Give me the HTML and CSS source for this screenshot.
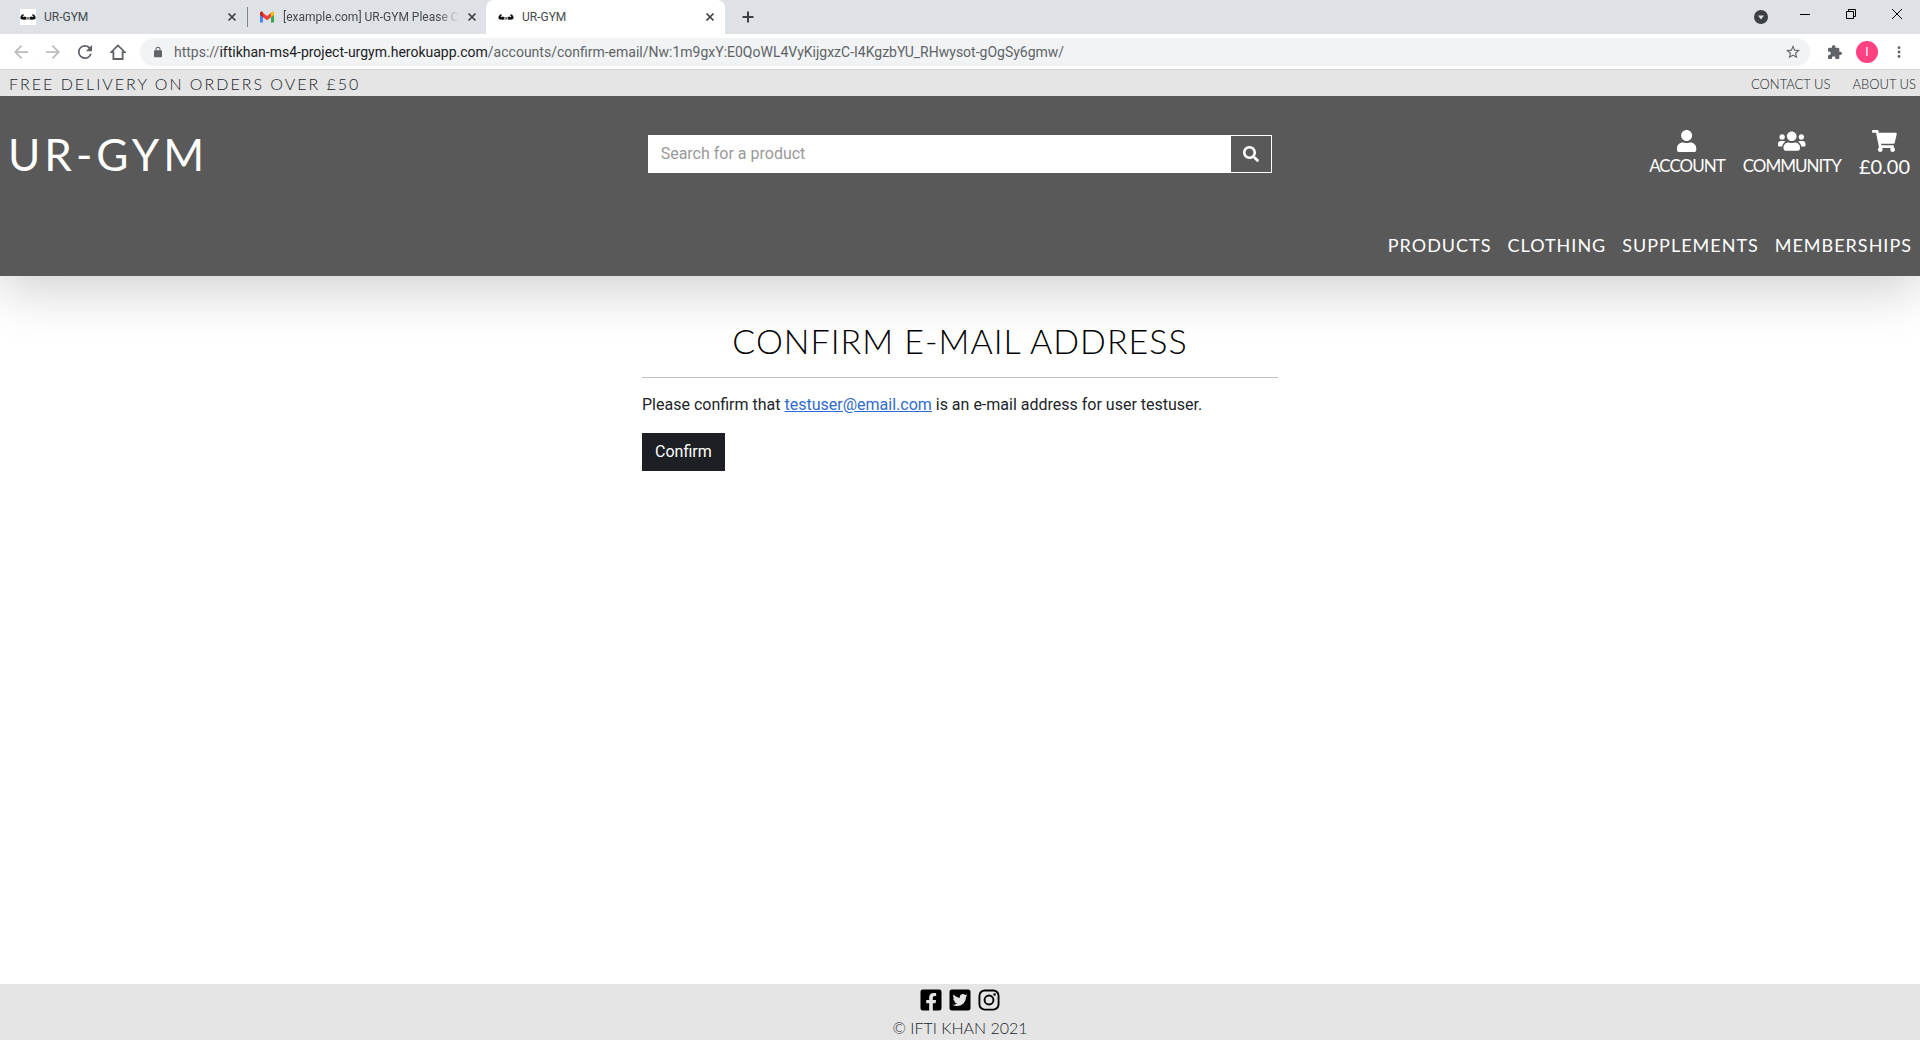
FILE: index.html
```html
<!DOCTYPE html>
<html lang="en">
<head>
<meta charset="utf-8">
<title>UR-GYM</title>
<link rel="stylesheet" href="styles.css">
</head>
<body>
<svg class="defs" aria-hidden="true">
  <symbol id="arms" viewBox="0 0 16 16"><path d="M.6 7.600L2 5.400l2 .2-.4 1.200-1 .2.600 1.100L5 7.400l1.500 1h3l1.500-1 1.800.7.600-1.100-1-.2-.4-1.200 2-.2 1.400 2.200.2 1.900-1.400 1-3.200.2-1.500-.5H6.500l-1.500.5-3.200-.2-1.400-1z"/><path d="M6 8.800h1v1.200H6zm1.500 0h1v1.200h-1zm1.500 0h1v1.200H9z" fill="#bbb"/></symbol>
  <symbol id="close" viewBox="0 0 10 10"><path d="M1.500 1.500l7 7m0-7l-7 7" fill="none" stroke="currentColor" stroke-width="1.700"/></symbol>
</svg>
<div class="browser">
  <div class="tabs">
    <div class="tab">
      <svg class="favicon boxed"><use href="#arms"/></svg>
      <span class="tab-title">UR-GYM</span>
      <button class="tab-close" aria-label="Close tab"><svg><use href="#close"/></svg></button>
    </div>
    <div class="tab divided">
      <svg class="favicon" viewBox="0 0 16 16"><path fill="#4285f4" d="M1 13.500V4h3v9.500z"/><path fill="#34a853" d="M12 13.500V4h3v9.500z"/><path fill="#ea4335" d="M4 8.300V4l4 3 4-3v4.300l-4 3z"/><path fill="#c5221f" d="M1 6V4.200C1 2.500 2.800 2 4 3v5.300z"/><path fill="#fbbc04" d="M15 6V4.200c0-1.700-1.800-2.200-3-1.200v5.300z"/></svg>
      <span class="tab-title faded">[example.com] UR-GYM Please C</span>
      <button class="tab-close" aria-label="Close tab"><svg><use href="#close"/></svg></button>
    </div>
    <div class="tab active">
      <svg class="favicon"><use href="#arms"/></svg>
      <span class="tab-title">UR-GYM</span>
      <button class="tab-close" aria-label="Close tab"><svg><use href="#close"/></svg></button>
    </div>
    <button class="new-tab" aria-label="New tab"><svg viewBox="0 0 14 14" width="14" height="14"><path d="M7 1.500v11M1.500 7h11" stroke="#3c4043" stroke-width="2"/></svg></button>
    <div class="window-controls">
      <button class="tab-search" aria-label="Search tabs"><svg viewBox="0 0 14 14" width="14" height="14"><circle cx="7" cy="7" r="7" fill="#3c4043"/><path d="M4 5.500h6L7 9.500z" fill="#dee1e6"/></svg></button>
      <button class="win" aria-label="Minimize"><svg viewBox="0 0 10 10" width="10" height="10"><path d="M0 5.500h10" stroke="#000"/></svg></button>
      <button class="win" aria-label="Restore"><svg viewBox="0 0 10 10" width="10" height="10"><path d="M.5 2.500h7v7h-7zM2.500 2.500v-2h7v7h-2" fill="none" stroke="#000"/></svg></button>
      <button class="win" aria-label="Close"><svg viewBox="0 0 10 10" width="10" height="10"><path d="M0 0l10 10M10 0L0 10" stroke="#000"/></svg></button>
    </div>
  </div>
  <div class="toolbar">
    <button class="dim" aria-label="Back"><svg viewBox="4 4 16 16"><path d="M20 11H7.830l5.590-5.590L12 4l-8 8 8 8 1.410-1.410L7.830 13H20z"/></svg></button>
    <button class="dim" aria-label="Forward"><svg viewBox="4 4 16 16"><path d="M4 11h12.170l-5.590-5.590L12 4l8 8-8 8-1.410-1.410L16.170 13H4z"/></svg></button>
    <button aria-label="Reload"><svg viewBox="4 4 16 16"><path d="M17.650 6.350A7.960 7.960 0 0 0 12 4a8 8 0 1 0 7.730 10h-2.080A6 6 0 1 1 12 6c1.660 0 3.140.69 4.220 1.780L13 11h7V4z"/></svg></button>
    <button class="home" aria-label="Home"><svg viewBox="0 0 16 16"><path d="M8 1.400L1.200 8.200H3.400V15h9.200V8.200h2.200z" fill="none" stroke="currentColor" stroke-width="1.800"/></svg></button>
    <div class="address">
      <svg class="lock" viewBox="4 1 16 21"><path d="M18 8h-1V6A5 5 0 0 0 7 6v2H6a2 2 0 0 0-2 2v10c0 1.100.9 2 2 2h12a2 2 0 0 0 2-2V10a2 2 0 0 0-2-2zm-9-2a3 3 0 0 1 6 0v2H9z"/></svg>
      <span class="url">https://<b>iftikhan-ms4-project-urgym.herokuapp.com</b>/accounts/confirm-email/Nw:1m9gxY:E0QoWL4VyKijgxzC-I4KgzbYU_RHwysot-gOgSy6gmw/</span>
      <button aria-label="Bookmark"><svg viewBox="2 2 20 20"><path d="M22 9.240l-7.190-.62L12 2 9.190 8.630 2 9.240l5.460 4.730L5.820 21 12 17.270 18.180 21l-1.630-7.030zM12 15.400l-3.760 2.270 1-4.280-3.320-2.880 4.380-.38L12 6.100l1.710 4.040 4.380.38-3.320 2.880 1 4.280z"/></svg></button>
    </div>
    <div class="tools">
      <button aria-label="Extensions"><svg viewBox="2 1 21 21"><path d="M20.500 11H19V7a2 2 0 0 0-2-2h-4V3.500a2.500 2.500 0 0 0-5 0V5H4a2 2 0 0 0-2 2v3.800h1.500a2.700 2.700 0 0 1 0 5.400H2V20c0 1.100.9 2 2 2h3.800v-1.500a2.700 2.700 0 0 1 5.400 0V22H17a2 2 0 0 0 2-2v-4h1.500a2.500 2.500 0 0 0 0-5z"/></svg></button>
      <button class="avatar" aria-label="Profile">I</button>
      <button aria-label="Menu"><svg viewBox="0 0 16 16"><circle cx="8" cy="3" r="1.600"/><circle cx="8" cy="8" r="1.600"/><circle cx="8" cy="13" r="1.600"/></svg></button>
    </div>
  </div>
</div>

<div class="promo">
  <span class="promo-text">FREE DELIVERY ON ORDERS OVER £50</span>
  <nav class="promo-links"><a href="#">CONTACT US</a><a href="#">ABOUT US</a></nav>
</div>

<header class="header">
  <div class="header-main">
    <a class="brand" href="#">UR-GYM</a>
    <form class="search">
      <input type="text" placeholder="Search for a product" aria-label="Search for a product">
      <button type="button" aria-label="Search"><svg viewBox="0 0 512 512" width="16" height="16"><path d="M505 442.700L405.300 343c-4.500-4.500-10.600-7-17-7H372c27.600-35.300 44-79.700 44-128C416 93.100 322.900 0 208 0S0 93.100 0 208s93.100 208 208 208c48.300 0 92.700-16.400 128-44v16.300c0 6.400 2.500 12.500 7 17l99.700 99.700c9.400 9.400 24.600 9.400 33.900 0l28.300-28.300c9.400-9.400 9.400-24.600.1-34zM208 336c-70.700 0-128-57.200-128-128 0-70.700 57.200-128 128-128 70.700 0 128 57.200 128 128 0 70.700-57.200 128-128 128z"/></svg></button>
    </form>
    <nav class="user-links">
      <a href="#"><svg viewBox="0 0 448 512"><path d="M224 256c70.700 0 128-57.300 128-128S294.700 0 224 0 96 57.300 96 128s57.300 128 128 128zm89.600 32h-16.700c-22.200 10.200-46.900 16-72.900 16s-50.600-5.800-72.900-16h-16.700C60.200 288 0 348.200 0 422.400V464c0 26.500 21.500 48 48 48h352c26.500 0 48-21.500 48-48v-41.600c0-74.200-60.200-134.400-134.400-134.400z"/></svg>ACCOUNT</a>
      <a href="#"><svg viewBox="0 0 640 512"><path d="M96 224c35.300 0 64-28.700 64-64s-28.700-64-64-64-64 28.700-64 64 28.700 64 64 64zm448 0c35.300 0 64-28.700 64-64s-28.700-64-64-64-64 28.700-64 64 28.700 64 64 64zm32 32h-64c-17.600 0-33.500 7.100-45.100 18.600 40.300 22.100 68.900 62 75.100 109.400h66c17.700 0 32-14.300 32-32v-32c0-35.300-28.700-64-64-64zm-256 0c61.900 0 112-50.100 112-112S381.900 32 320 32 208 82.100 208 144s50.100 112 112 112zm76.800 32h-8.300c-20.800 10-43.900 16-68.500 16s-47.600-6-68.500-16h-8.300C179.600 288 128 339.600 128 403.200V432c0 26.500 21.500 48 48 48h288c26.500 0 48-21.500 48-48v-28.800c0-63.600-51.600-115.200-115.200-115.200zm-223.700-13.400C161.500 263.100 145.600 256 128 256H64c-35.300 0-64 28.700-64 64v32c0 17.700 14.300 32 32 32h65.900c6.300-47.400 34.900-87.300 75.200-109.400z"/></svg>COMMUNITY</a>
      <a href="#"><svg viewBox="0 0 576 512"><path d="M528.120 301.319l47.273-208C578.806 78.301 567.391 64 551.990 64H159.208l-9.166-44.810C147.758 8.021 137.930 0 126.529 0H24C10.745 0 0 10.745 0 24v16c0 13.255 10.745 24 24 24h69.883l70.248 343.435C147.325 417.100 136 435.222 136 456c0 30.928 25.072 56 56 56s56-25.072 56-56c0-15.674-6.447-29.835-16.824-40h209.647C430.447 426.165 424 440.326 424 456c0 30.928 25.072 56 56 56s56-25.072 56-56c0-22.172-12.888-41.332-31.579-50.405l5.517-24.276c3.413-15.018-8.002-29.319-23.403-29.319H218.117l-6.545-32h293.145c11.206 0 20.920-7.754 23.403-18.681z"/></svg><span class="total">£0.00</span></a>
    </nav>
  </div>
  <nav class="main-nav"><a href="#">PRODUCTS</a><a href="#">CLOTHING</a><a href="#">SUPPLEMENTS</a><a href="#">MEMBERSHIPS</a></nav>
</header>

<main class="content">
  <h1>CONFIRM E-MAIL ADDRESS</h1>
  <hr>
  <p>Please confirm that <a href="mailto:testuser@email.com">testuser@email.com</a> is an e-mail address for user testuser.</p>
  <button class="confirm" type="button">Confirm</button>
</main>

<footer class="footer">
  <div class="social">
    <a href="#" aria-label="Facebook"><svg viewBox="0 0 448 512"><path d="M400 32H48A48 48 0 0 0 0 80v352a48 48 0 0 0 48 48h137.250V327.690h-63V256h63v-54.640c0-62.150 37-96.480 93.670-96.480 27.140 0 55.520 4.840 55.520 4.840v61h-31.270c-30.810 0-40.420 19.120-40.420 38.730V256h68.780l-11 71.690h-57.780V480H400a48 48 0 0 0 48-48V80a48 48 0 0 0-48-48z"/></svg></a>
    <a href="#" aria-label="Twitter"><svg viewBox="0 0 448 512"><path d="M400 32H48C21.500 32 0 53.500 0 80v352c0 26.500 21.500 48 48 48h352c26.500 0 48-21.500 48-48V80c0-26.500-21.500-48-48-48zm-48.900 158.800c.2 2.800.2 5.700.2 8.500 0 86.700-66 186.600-186.600 186.600-37.200 0-71.700-10.800-100.700-29.400 5.300.6 10.400.8 15.800.8 30.700 0 58.900-10.400 81.400-28-28.800-.6-53-19.500-61.300-45.500 10.100 1.500 19.200 1.500 29.600-1.200-30-6.100-52.500-32.500-52.500-64.400v-.8c8.700 4.900 18.900 7.900 29.600 8.300a65.447 65.447 0 0 1-29.200-54.600c0-12.200 3.200-23.400 8.900-33.100 32.300 39.800 80.800 65.800 135.200 68.600-9.300-44.500 24-80.600 64-80.600 18.900 0 35.900 7.900 47.900 20.700 14.800-2.800 29-8.300 41.600-15.800-4.900 15.200-15.200 28-28.800 36.100 13.200-1.400 26-5.100 37.800-10.200-8.900 13.100-20.100 24.700-32.900 34z"/></svg></a>
    <a href="#" aria-label="Instagram"><svg viewBox="0 0 448 512"><rect x="20" y="52" width="408" height="408" rx="112" fill="none" stroke="#000" stroke-width="40"/><circle cx="224" cy="256" r="95" fill="none" stroke="#000" stroke-width="40"/><circle cx="343" cy="137" r="27"/></svg></a>
  </div>
  <span>© IFTI KHAN 2021</span>
</footer>
</body>
</html>
```
FILE: styles.css
```css
* { box-sizing: border-box; }

body {
  margin: 0;
  min-height: 100vh;
  display: flex;
  flex-direction: column;
  background: #fff;
  color: #212529;
  font: 16px/24px Roboto, sans-serif;
}

a { color: inherit; text-decoration: none; }
button { border: 0; padding: 0; background: none; font: inherit; color: inherit; }
svg { display: block; fill: currentColor; }
.defs { position: absolute; width: 0; height: 0; }

/* Browser chrome */
.browser { color: #5f6368; }
.browser button { display: flex; align-items: center; justify-content: center; }

.tabs {
  display: flex;
  height: 34px;
  padding-left: 8px;
  background: #dee1e6;
  font-size: 12px;
  line-height: 16px;
  color: #45494d;
}
.tab {
  display: flex;
  align-items: center;
  gap: 8px;
  width: 239px;
  padding: 0 10px 0 12px;
}
.divided { background: linear-gradient(#80868b, #80868b) 0 50% / 1px 20px no-repeat; }
.active { background: #fff; border-radius: 8px 8px 0 0; }
.favicon { width: 16px; height: 16px; flex: none; color: #111; }
.boxed { background: #fff; }
.tab-title { flex: 1; white-space: nowrap; }
.faded { mask-image: linear-gradient(90deg, #000 88%, transparent); }
.tab-close svg { width: 10px; height: 10px; color: #3c4043; }
.new-tab { width: 46px; }
.window-controls { display: flex; margin-left: auto; }
.window-controls .win { width: 46px; height: 28px; }
.tab-search { width: 42px; }

.toolbar {
  display: flex;
  align-items: center;
  gap: 18px;
  height: 36px;
  padding: 0 14px;
  border-bottom: 1px solid #d5d7da;
}
.toolbar button svg { width: 14px; height: 14px; }
.toolbar .home svg { width: 16px; height: 16px; }
.toolbar .dim { color: #babcbe; }
.address {
  flex: 1;
  display: flex;
  align-items: center;
  gap: 12px;
  height: 28px;
  margin-left: -4px;
  padding: 0 10px 0 14px;
  border-radius: 14px;
  background: #f1f3f4;
  font-size: 14px;
}
.lock { width: 8px; height: 12px; }
.url { flex: 1; white-space: nowrap; }
.url b { font-weight: 400; color: #202124; }
.tools { display: flex; align-items: center; gap: 14px; }
.toolbar .avatar {
  width: 22px;
  height: 22px;
  border-radius: 50%;
  background: #ff4081;
  color: #fff;
  font-size: 12px;
}

/* Site */
.promo, .header, h1, .footer { font-family: Lato, sans-serif; }
.promo, h1, .footer { font-weight: 300; }

.promo {
  position: relative;
  z-index: 1;
  display: flex;
  align-items: center;
  justify-content: space-between;
  height: 26px;
  padding: 2px 4px 0 9px;
  background: #e5e5e5;
}
.promo-text { letter-spacing: 2px; }
.promo-links { display: flex; gap: 22px; font-size: 13px; }

.header {
  background: #595959;
  color: #fff;
  padding: 24px 8px 18px;
  box-shadow: 0 16px 48px rgba(0, 0, 0, .175);
}
.header-main {
  display: grid;
  grid-template-columns: 1fr 1fr 1fr;
  align-items: center;
}
.brand { font-size: 44px; line-height: 68px; letter-spacing: 4px; }
.search { display: flex; height: 38px; margin: 0 5px; border: 1px solid #fff; }
.search input {
  flex: 1;
  min-width: 0;
  border: 0;
  padding: 0 12px;
  font: 16px/24px Roboto, sans-serif;
}
.search input::placeholder { color: #999; }
.search button { width: 40px; display: flex; align-items: center; justify-content: center; }
.user-links {
  display: flex;
  justify-content: flex-end;
  gap: 18px;
  padding-right: 2px;
  font-size: 17px;
  letter-spacing: -1px;
}
.user-links a { display: flex; flex-direction: column; align-items: center; gap: 2px; }
.user-links svg { height: 22px; }
.total { font-size: 20px; letter-spacing: 0; }
.main-nav {
  display: flex;
  justify-content: flex-end;
  gap: 16px;
  padding-top: 44px;
  font-size: 18px;
  line-height: 26px;
  letter-spacing: 1px;
}

.content { flex: 1; width: 636px; max-width: 100%; margin: 0 auto; padding-top: 41px; }
h1 { margin: 0; font-size: 34px; line-height: 48px; letter-spacing: 1px; text-align: center; color: #000; }
hr { margin: 12px 0 15px; border: 0; border-top: 1px solid #bfc0c1; }
p { margin: 0 0 16px; }
p a { color: #2f6bd0; text-decoration: underline; }
.confirm { height: 38px; padding: 0 13px; background: #1c1f23; color: #fff; }

.footer { height: 56px; padding-top: 4px; background: #e5e5e5; text-align: center; }
.social { display: flex; justify-content: center; gap: 7px; padding-bottom: 4px; color: #000; }
.social svg { width: 22px; height: 24px; }
```
